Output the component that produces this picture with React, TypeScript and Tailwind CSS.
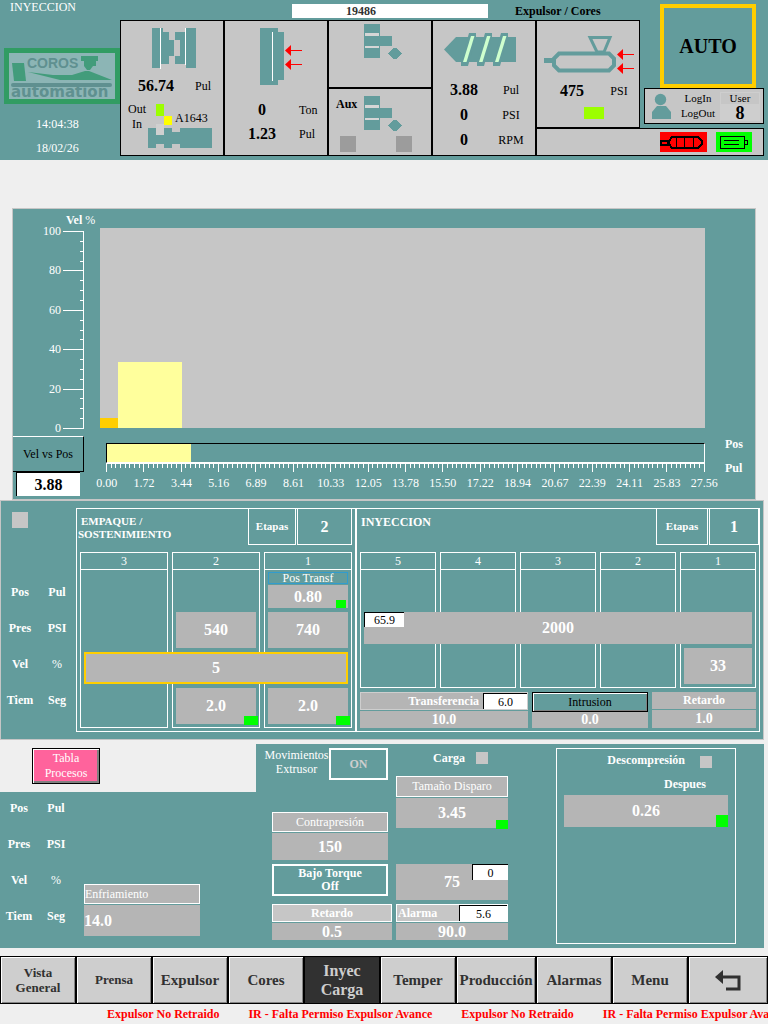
import type { ReactNode } from "react";

const TEAL = "#639c9c";

const stages = [
  { id: "sostenimiento", share: 0.8 / 27.56, speed: 5, fill: "bg-[#ffce00]" },
  { id: "inyeccion", share: 2.92 / 27.56, speed: 33, fill: "bg-[#ffff9c]" },
];

const posLabels = [
  "0.00", "1.72", "3.44", "5.16", "6.89", "8.61", "10.33", "12.05", "13.78",
  "15.50", "17.22", "18.94", "20.67", "22.39", "24.11", "25.83", "27.56",
];

const alarms = [
  "Expulsor No Retraido",
  "IR - Falta Permiso Expulsor Avance",
  "Expulsor No Retraido",
  "IR - Falta Permiso Expulsor Avance",
];

function Field({ label, value, className = "" }: { label: string; value: string; className?: string }) {
  return (
    <input
      aria-label={label}
      defaultValue={value}
      className={`block w-full min-w-0 rounded-none bg-[#b5b5b5] text-center font-bold text-white outline-none ${className}`}
    />
  );
}

function SmallField({ label, value, className = "" }: { label: string; value: string; className?: string }) {
  return (
    <input
      aria-label={label}
      defaultValue={value}
      className={`block rounded-none border-t border-l border-black bg-white text-center text-xs text-black outline-none ${className}`}
    />
  );
}

function Marked({ children, mark }: { children: ReactNode; mark: string }) {
  return (
    <div className="relative">
      {children}
      <span className={`absolute bg-[#00ff00] ${mark}`} />
    </div>
  );
}

function Cell({ className = "", children }: { className?: string; children: ReactNode }) {
  return <section className={`border border-black bg-[#c6c6c6] ${className}`}>{children}</section>;
}

function Reading({ value, unit }: { value: string; unit: string }) {
  return (
    <div className="flex h-6 items-center">
      <span className="w-[66px] pl-1 text-center text-base font-bold">{value}</span>
      <span className="w-8 text-center text-xs">{unit}</span>
    </div>
  );
}

function CoreIcon() {
  return (
    <svg width="40" height="36" viewBox="364 24 40 36" shapeRendering="crispEdges" fill={TEAL} aria-hidden="true">
      <path d="M364 24h16v34h-16z" />
      <path d="M365 33h14v3h-14zM365 46h14v2h-14z" fill="#d6d6d6" />
      <path d="M364 36h28v10h-28z" />
      <path d="M388 53.500l5-5.500h4l5 5.500-5 5.500h-4z" />
    </svg>
  );
}

function RedArrow({ x, y }: { x: number; y: number }) {
  return (
    <g fill="#ff0000">
      <path d={`M${x} ${y}l6-5.500v11z`} />
      <path d={`M${x + 4} ${y - 0.5}h13v1h-13z`} />
    </g>
  );
}

function Header() {
  return (
    <header className="grid grid-cols-[120px_104fr_104fr_104fr_104fr_104fr_128px] grid-rows-[20px_68px_40px_28px] bg-[#639c9c] pb-1">
      <div className="col-start-1 row-span-4 row-start-1 flex flex-col text-xs text-white">
        <h1 className="pl-[10px] leading-[14px]">INYECCION</h1>
        <svg className="mt-[34px] ml-1" width="116" height="56" viewBox="0 0 116 56" role="img" aria-label="Coros automation">
          <path d="M0 0h116v56H0z" fill="#319c63" />
          <path d="M5 5h106v46H5z" fill="#8cb5b5" />
          <path d="M8 15h12l2 18H10z" fill="#429c7b" />
          <path d="M24 24l25 3h19l13-4h4l23 9H56z" fill="#429c7b" />
          <path d="M77 8h17v5h-2v5h-3l-3 4h-3l-3-4v-5h-3z" fill="#429c7b" />
          <rect x="7" y="35" width="101" height="4" rx="2" fill="#5f9090" />
          <text x="23" y="20" fontSize="14" fontWeight="700" fontFamily="Liberation Sans, sans-serif" fill="#5f9090">COROS</text>
          <text x="7" y="49" fontSize="15" fontWeight="700" fontFamily="DejaVu Sans, sans-serif" fill="#5f9090">automation</text>
        </svg>
        <time className="mt-3 pl-9 leading-4">14:04:38</time>
        <time className="mt-2 pl-9 leading-4">18/02/26</time>
      </div>

      <div className="col-span-5 col-start-2 row-start-1 flex">
        <input
          aria-label="Orden"
          defaultValue="19486"
          className="mt-1 ml-[172px] h-[14px] w-[196px] bg-white pl-[54px] text-xs font-bold text-[#313131] outline-none"
        />
        <a href="#cores" className="mt-1 ml-[27px] text-xs leading-[14px] font-bold whitespace-nowrap">Expulsor / Cores</a>
      </div>

      <Cell className="col-start-2 row-span-3 row-start-2">
        <svg className="mt-[7px] ml-[31px]" width="44" height="41" viewBox="152 28 44 41" shapeRendering="crispEdges" fill={TEAL} aria-hidden="true">
          <path d="M152 28h9v40h-9zM161 28h2v4h6v8h5v16h-5v8h-8zM175 32h10v32h-10v-8h5V40h-5zM186 28h10v40h-10z" />
          <path d="M160 28h1v41h-1zM185 28h1v37h-1z" fill="#fff" />
        </svg>
        <div className="mt-[5px]"><Reading value="56.74" unit="Pul" /></div>
        <div className="relative mt-1 flex">
          <div className="w-[27px] pl-[7px] text-xs leading-[15px]">
            <p>Out</p>
            <p className="pl-1">In</p>
          </div>
          <svg width="64" height="46" viewBox="148 102 64 46" shapeRendering="crispEdges" aria-hidden="true">
            <path d="M148 128h8v7h8v-7h8v4h8v-4h32v20h-32v-4h-8v4h-8v-4h-8v4h-8z" fill={TEAL} />
            <path d="M156 104h8v12h-8z" fill="#9cff00" />
            <path d="M164 116h8v9h-8z" fill="#ffff00" />
            <path d="M156 124h8v11h-8z" fill="#d0d0d0" />
          </svg>
          <span className="absolute top-2 left-[54px] text-xs">A1643</span>
        </div>
      </Cell>

      <Cell className="col-start-3 row-span-3 row-start-2">
        <svg className="mt-[7px] ml-[35px]" width="43" height="57" viewBox="260 28 43 57" fill={TEAL} aria-hidden="true">
          <path d="M260 28h18v4h6v48h-6v5h-18z" />
          <path d="M272 32h1v49h-1z" fill="#fff" />
          <RedArrow x={285} y={50.5} />
          <RedArrow x={285} y={64.5} />
        </svg>
        <div className="mt-[13px] grid grid-cols-[74px_1fr] items-center leading-6">
          <span className="text-center text-base leading-6 font-bold">0</span>
          <span className="text-xs leading-6">Ton</span>
          <span className="text-center text-base leading-6 font-bold">1.23</span>
          <span className="text-xs leading-6">Pul</span>
        </div>
      </Cell>

      <Cell className="col-start-4 row-start-2 pt-[3px] pl-[35px]"><CoreIcon /></Cell>
      <Cell className="col-start-4 row-span-2 row-start-3">
        <div className="flex pt-[7px]">
          <span className="w-[35px] pl-[7px] text-xs leading-4 font-bold">Aux</span>
          <CoreIcon />
        </div>
        <div className="mt-1 flex justify-between pr-[19px] pl-[11px]">
          <span className="size-4 bg-[#9c9c9c]" />
          <span className="size-4 bg-[#9c9c9c]" />
        </div>
      </Cell>

      <Cell className="col-start-5 row-span-3 row-start-2">
        <svg className="mt-3 ml-[11px]" width="73" height="34" viewBox="444 33 73 34" fill={TEAL} aria-hidden="true">
          <path d="M444 49.500L456 37h60v25h-60z" />
          {[0, 16, 32].map((dx) => (
            <g key={dx} transform={`translate(${dx})`}>
              <path d="M469 33h7v4l-8 29h-7v-4z" />
              <path d="M471 36h3.500l-8 26H463z" fill="#ceffce" />
            </g>
          ))}
        </svg>
        <div className="mt-[11px] -ml-1 flex flex-col gap-px">
          <Reading value="3.88" unit="Pul" />
          <Reading value="0" unit="PSI" />
          <Reading value="0" unit="RPM" />
        </div>
      </Cell>

      <Cell className="col-start-6 row-span-2 row-start-2">
        <svg className="mt-[13px] ml-[7px]" width="91" height="41" viewBox="544 34 91 41" aria-hidden="true">
          <path d="M544 58h9v5h-9z" fill={TEAL} />
          <path d="M559 53.500h50l5 5v7l-5 5h-50l-5-5v-7z" fill="none" stroke={TEAL} strokeWidth="4" />
          <path d="M590 37.500h20l-6 14.500h-7z" fill="none" stroke={TEAL} strokeWidth="3" />
          <RedArrow x={617} y={54.5} />
          <RedArrow x={617} y={68.5} />
        </svg>
        <div className="mt-1"><Reading value="475" unit="PSI" /></div>
        <div className="mt-1 ml-[47px] h-3 w-5 bg-[#9cff00]" />
      </Cell>

      <button className="col-start-7 row-span-2 row-start-1 mt-1 mr-3 ml-5 border-4 border-[#ffce00] text-xl font-bold">AUTO</button>

      <Cell className="col-start-7 row-start-3 mr-1 mb-1 ml-1 flex items-center pl-[7px]">
        <svg width="20" height="26" viewBox="652 94 20 26" fill={TEAL} aria-hidden="true">
          <circle cx="660.500" cy="100.500" r="5.700" />
          <path d="M652 120v-7l5-6h9l5 6v7z" />
        </svg>
        <div className="flex w-12 flex-col items-center pl-1 text-[11px] leading-[15px]">
          <button>LogIn</button>
          <button>LogOut</button>
        </div>
        <div className="w-10 text-center">
          <p className="border border-[#cecece] text-[11px] leading-[11px]">User</p>
          <p className="bg-[#cecece] text-lg leading-4 font-bold">8</p>
        </div>
      </Cell>

      <Cell className="col-span-2 col-start-6 row-start-4 mr-1 flex items-center justify-end gap-[9px] pr-[11px]">
        <svg width="47" height="20" viewBox="0 0 47 20" shapeRendering="crispEdges" aria-hidden="true">
          <path d="M0 0h47v20H0z" fill="#ff0000" />
          <path d="M1 8.500h7v4H1zM12 5h26l4 4v3l-4 4H12l-3-4V9z" fill="none" stroke="#000" strokeWidth="2" />
          <path d="M16.500 5v11M24.500 5v11M33.500 5v11" stroke="#000" />
        </svg>
        <svg width="36" height="20" viewBox="0 0 36 20" shapeRendering="crispEdges" aria-hidden="true">
          <path d="M0 0h36v20H0z" fill="#00ff00" />
          <path d="M4.500 4.500h24v12h-24zM28.500 8.500h3v4h-3zM8 8.500h15M8 12.500h15" fill="none" stroke="#000" />
        </svg>
      </Cell>
    </header>
  );
}

function Chart() {
  return (
    <section className="mt-12 mr-3 ml-3 grid grid-cols-[87px_1fr_50px] border border-[#c6c6c6] bg-[#639c9c] pb-[3px] text-xs text-white">
      <div>
        <h2 className="mt-1 ml-[53px] leading-[14px] font-bold">Vel <span className="font-normal">%</span></h2>
        <div className="-mt-[2px] -mb-[6px] flex">
          <div className="flex h-[209px] w-12 flex-col justify-between text-right leading-3">
            {[100, 80, 60, 40, 20, 0].map((n) => <span key={n}>{n}</span>)}
          </div>
          <svg className="mt-[6px] ml-[2px]" width="21" height="198" viewBox="0 0 21 198" shapeRendering="crispEdges" stroke="#fff" aria-hidden="true">
            <path d="M20.500 0v198" />
            {Array.from({ length: 21 }, (_, i) => (
              <path key={i} d={`M${i % 4 ? 17 : 0} ${Math.round(i * 9.85) + 0.5}H21`} />
            ))}
          </svg>
        </div>
      </div>
      <div className="mt-[19px] flex h-[200px] items-end bg-[#c6c6c6]">
        {stages.map((s) => (
          <div key={s.id} className={s.fill} style={{ width: `${s.share * 100}%`, height: `${s.speed}%` }} />
        ))}
      </div>
      <div />

      <div className="mt-2">
        <button className="block h-9 w-[71px] border-t border-r border-b border-t-white border-r-black border-b-black text-xs text-black">Vel vs Pos</button>
        <SmallField label="Posición actual" value="3.88" className="ml-[3px] h-6 w-16 text-[16px]! font-bold" />
      </div>
      <div className="mt-[15px]">
        <div className="ml-[6px] h-5 border border-t-black border-r-white border-b-white border-l-black">
          <div className="h-full bg-[#ffff9c]" style={{ width: `${(3.88 / 27.56) * 100}%` }} />
        </div>
        <svg className="ml-[6px] h-[9px] w-full" viewBox="0 0 605 9" preserveAspectRatio="none" shapeRendering="crispEdges" stroke="#fff" aria-hidden="true">
          <path d="M0 0.500h599" />
          {Array.from({ length: 129 }, (_, i) => (
            <path key={i} d={`M${Math.round(i * 4.67) + 0.5} 0V${i % 8 ? 5 : 9}`} />
          ))}
        </svg>
        <div className="-mr-[18px] -ml-3 grid grid-cols-17 pt-1 text-center leading-[14px]">
          {posLabels.map((t) => <span key={t}>{t}</span>)}
        </div>
      </div>
      <div className="flex flex-col gap-[10px] pt-[9px] pl-5 leading-[14px] font-bold">
        <span>Pos</span>
        <span>Pul</span>
      </div>
    </section>
  );
}

function RowLabels() {
  const rows = [["Pos", "Pul"], ["Pres", "PSI"], ["Vel", "%"], ["Tiem", "Seg"]];
  return (
    <dl className="grid w-[76px] grid-cols-[38px_36px] text-center text-xs leading-9 font-bold text-white">
      {rows.map(([name, unit]) => (
        <div key={name} className="contents">
          <dt>{name}</dt>
          <dd className={unit === "%" ? "font-normal" : ""}>{unit}</dd>
        </div>
      ))}
    </dl>
  );
}

function StageHeader({ title, count, labelWidth, countWidth }: { title: ReactNode; count: string; labelWidth: string; countWidth: string }) {
  return (
    <div className="flex h-[43px]">
      <h2 className="flex-1 pl-1">{title}</h2>
      <span className={`h-9 border-r border-b border-l border-white text-center text-[11px] leading-[34px] font-bold ${labelWidth}`}>Etapas</span>
      <input
        aria-label="Etapas"
        defaultValue={count}
        className={`ml-px h-9 border-r border-b border-l border-white bg-transparent text-center text-base font-bold outline-none ${countWidth}`}
      />
    </div>
  );
}

const colStart = ["col-start-1", "col-start-2", "col-start-3", "col-start-4", "col-start-5"];

function StageColumns({ names }: { names: string[] }) {
  return (
    <>
      {names.map((n, i) => (
        <div key={n} className={`${colStart[i]} row-start-1 row-end-[-1] border border-white`}>
          <p className="border-b border-white text-center text-xs leading-4">{n}</p>
        </div>
      ))}
    </>
  );
}

function StagesPanel() {
  return (
    <section className="mr-1 flex border border-[#c6c6c6] bg-[#639c9c] pt-[7px] pr-[3px] pb-[7px] text-white">
      <div className="w-[75px]">
        <div className="mt-1 mb-[46px] ml-[11px] size-4 bg-[#c6c6c6]" />
        <RowLabels />
      </div>

      <div className="flex-[272] border border-white px-[3px] pb-[3px]">
        <div className="-ml-[3px]">
          <StageHeader
            title={<span className="-ml-[3px] block pt-[6px] text-[11px] leading-[13px] font-bold"><span className="pl-[3px]">EMPAQUE /</span><br />SOSTENIMIENTO</span>}
            count="2"
            labelWidth="w-12"
            countWidth="w-[55px]"
          />
        </div>
        <div className="grid grid-cols-3 grid-rows-[20px_40px_40px_36px_40px] gap-x-1">
          <StageColumns names={["3", "2", "1"]} />
          <div className="col-start-3 row-start-2 mx-1">
            <Marked mark="right-[2px] bottom-0 h-2 w-[10px]">
              <p className="mb-px border border-[#319cce] text-center text-xs leading-[10px]">Pos Transf</p>
              <Field label="Posición de transferencia" value="0.80" className="h-[23px] text-base" />
            </Marked>
          </div>
          <div className="col-start-2 row-start-3 mx-1"><Field label="Presión 2" value="540" className="h-9 text-base" /></div>
          <div className="col-start-3 row-start-3 mx-1"><Field label="Presión 1" value="740" className="h-9 text-base" /></div>
          <div className="col-span-3 col-start-1 row-start-4 mx-1"><Field label="Velocidad" value="5" className="h-8 border-2 border-[#ffce00] text-base" /></div>
          <div className="col-start-2 row-start-5 mx-1">
            <Marked mark="-right-[2px] -bottom-px h-[9px] w-[14px]"><Field label="Tiempo 2" value="2.0" className="h-9 text-base" /></Marked>
          </div>
          <div className="col-start-3 row-start-5 mx-1">
            <Marked mark="-right-[2px] -bottom-px h-[9px] w-[14px]"><Field label="Tiempo 1" value="2.0" className="h-9 text-base" /></Marked>
          </div>
        </div>
      </div>

      <div className="flex-[396] border border-white px-[3px] pb-[3px]">
        <div className="-mr-[3px]">
          <StageHeader
            title={<span className="-ml-[3px] block pt-[6px] text-xs leading-[14px] font-bold">INYECCION</span>}
            count="1"
            labelWidth="w-[52px]"
            countWidth="w-[50px]"
          />
        </div>
        <div className="grid grid-cols-5 grid-rows-[20px_40px_36px_40px] gap-x-1">
          <StageColumns names={["5", "4", "3", "2", "1"]} />
          <div className="relative col-span-5 col-start-1 row-start-3 mx-1">
            <Field label="Presión de inyección" value="2000" className="h-8 text-base" />
            <SmallField label="Presión máxima" value="65.9" className="absolute top-0 left-0 h-[15px] w-10" />
          </div>
          <div className="col-start-5 row-start-4 mx-1"><Field label="Velocidad 1" value="33" className="h-9 text-base" /></div>
        </div>
        <div className="mt-1 grid grid-cols-[168fr_116fr_104fr] gap-x-1">
          <div>
            <div className="mb-px flex h-[18px] border border-[#cecece] bg-[#b5b5b5]">
              <span className="flex-1 pr-1 text-right text-xs leading-4 font-bold">Transferencia</span>
              <SmallField label="Transferencia actual" value="6.0" className="h-4 w-11" />
            </div>
            <Field label="Transferencia" value="10.0" className="h-[17px] text-sm" />
          </div>
          <div>
            <button className="block h-5 w-full border border-black text-xs text-black shadow-[inset_1px_1px_#fff,inset_-1px_-1px_#808080]">Intrusion</button>
            <Field label="Intrusion" value="0.0" className="h-4 text-sm" />
          </div>
          <div>
            <p className="mb-px h-[17px] bg-[#b5b5b5] text-center text-xs leading-[17px] font-bold">Retardo</p>
            <Field label="Retardo de inyección" value="1.0" className="h-[18px] text-sm" />
          </div>
        </div>
      </div>
    </section>
  );
}

function ChargePanel() {
  return (
    <section className="mt-1 mr-1 flex h-[204px] bg-[#639c9c] text-xs text-white">
      <div className="w-64">
        <div className="h-12 bg-[#efefef] pt-1 pl-8">
          <button className="h-9 w-[68px] border border-black bg-[#ff639c] leading-[15px] shadow-[inset_1px_1px_#fff,inset_-2px_-2px_#808080]">
            Tabla<br />Procesos
          </button>
        </div>
        <div className="flex">
          <div className="-mt-[2px]"><RowLabels /></div>
          <div className="ml-2 w-[116px] pt-[92px]">
            <label htmlFor="enfriamiento" className="mb-px block h-5 border border-white bg-[#b5b5b5] leading-[18px]">Enfriamiento</label>
            <input id="enfriamiento" defaultValue="14.0" className="block h-[31px] w-full bg-[#b5b5b5] text-base font-bold outline-none" />
          </div>
        </div>
      </div>

      <div className="w-[136px] pl-4">
        <div className="-ml-2 flex pt-1">
          <span className="w-[65px] text-center leading-[14px]">Movimientos Extrusor</span>
          <button className="h-8 w-[59px] border-2 border-white text-xs font-bold text-[#cecece]">ON</button>
        </div>
        <label htmlFor="contrapresion" className="mt-8 mr-1 mb-px block h-5 border border-white bg-[#b5b5b5] text-center leading-[18px]">Contrapresión</label>
        <div className="mr-1">
          <input id="contrapresion" defaultValue="150" className="block h-[27px] w-full bg-[#b5b5b5] text-center text-base font-bold outline-none" />
          <button className="mt-1 block h-8 w-full border-2 border-white leading-[13px] font-bold">Bajo Torque<br />Off</button>
        </div>
        <label htmlFor="retardo" className="mt-2 mb-px block h-[18px] border border-white bg-[#c6c6c6] text-center leading-4 font-bold">Retardo</label>
        <input id="retardo" defaultValue="0.5" className="block h-[17px] w-full bg-[#b5b5b5] text-center text-base font-bold outline-none" />
      </div>

      <div className="ml-1 w-28">
        <div className="flex h-8 items-start justify-end gap-[11px] pt-[7px] pr-5">
          <h2 className="leading-[14px] font-bold">Carga</h2>
          <span className="mt-px size-3 bg-[#c6c6c6]" />
        </div>
        <label htmlFor="disparo" className="mb-px block h-[21px] border border-white bg-[#b5b5b5] text-center leading-[19px]">Tamaño Disparo</label>
        <Marked mark="right-0 -bottom-px h-[9px] w-3">
          <input id="disparo" defaultValue="3.45" className="block h-[30px] w-full bg-[#b5b5b5] text-center text-base font-bold outline-none" />
        </Marked>
        <div className="relative mt-9">
          <Field label="Velocidad de carga" value="75" className="h-9 text-base" />
          <SmallField label="Velocidad actual" value="0" className="absolute top-0 right-0 h-4 w-9" />
        </div>
        <div className="mt-1 mb-px flex h-[18px] border border-white bg-[#c6c6c6]">
          <span className="flex-1 pl-px leading-4 font-bold">Alarma</span>
          <SmallField label="Alarma actual" value="5.6" className="h-4 w-12" />
        </div>
        <Field label="Alarma" value="90.0" className="h-[17px] text-base" />
      </div>

      <div className="mt-1 mr-7 mb-1 ml-12 flex-1 border border-white px-[7px]">
        <div className="flex justify-end gap-[15px] pt-1 pr-4">
          <h2 className="leading-[14px] font-bold">Descompresión</h2>
          <span className="mt-[3px] size-3 bg-[#c6c6c6]" />
        </div>
        <p className="mt-[9px] mb-1 pr-[22px] text-right leading-[14px] font-bold">Despues</p>
        <Marked mark="right-0 bottom-0 size-3">
          <Field label="Descompresión después" value="0.26" className="h-8 text-base" />
        </Marked>
      </div>
    </section>
  );
}

function NavButton({ size, active = false, children }: { size: string; active?: boolean; children: ReactNode }) {
  return (
    <button
      className={`flex h-12 items-center justify-center border border-black text-center font-bold ${size} ${
        active ? "bg-[#313131] text-[#cecece]" : "bg-[#cecece] text-[#313131] shadow-[inset_1px_1px_#fff,inset_-1px_-1px_#848484]"
      }`}
    >
      {children}
    </button>
  );
}

export default function App() {
  return (
    <div className="min-h-screen bg-[#efefef] font-['Liberation_Serif',serif] text-black">
      <Header />
      <main>
        <Chart />
        <StagesPanel />
        <ChargePanel />
      </main>
      <nav className="mt-2 grid grid-cols-[76fr_76fr_76fr_76fr_76fr_76fr_80fr_76fr_76fr_80fr]">
        <NavButton size="text-[13px] leading-[15px]">Vista<br />General</NavButton>
        <NavButton size="text-[13px]">Prensa</NavButton>
        <NavButton size="text-[15px]">Expulsor</NavButton>
        <NavButton size="text-[15px]">Cores</NavButton>
        <NavButton size="text-base leading-[19px]" active>Inyec<br />Carga</NavButton>
        <NavButton size="text-[15px]">Temper</NavButton>
        <NavButton size="text-[15px]">Producción</NavButton>
        <NavButton size="text-[15px]">Alarmas</NavButton>
        <NavButton size="text-[15px]">Menu</NavButton>
        <NavButton size="text-[15px]">
          <svg width="28" height="22" viewBox="0 0 28 22" role="img" aria-label="Volver">
            <path d="M1 8l8-7v14z" fill="#313131" />
            <path d="M7 8h18v12H12" fill="none" stroke="#313131" strokeWidth="3" />
          </svg>
        </NavButton>
      </nav>
      <footer className="flex gap-[29px] overflow-hidden pl-[107px] text-xs leading-5 font-bold whitespace-nowrap text-[#ff0000]">
        {alarms.map((a, i) => <span key={i}>{a}</span>)}
      </footer>
    </div>
  );
}
